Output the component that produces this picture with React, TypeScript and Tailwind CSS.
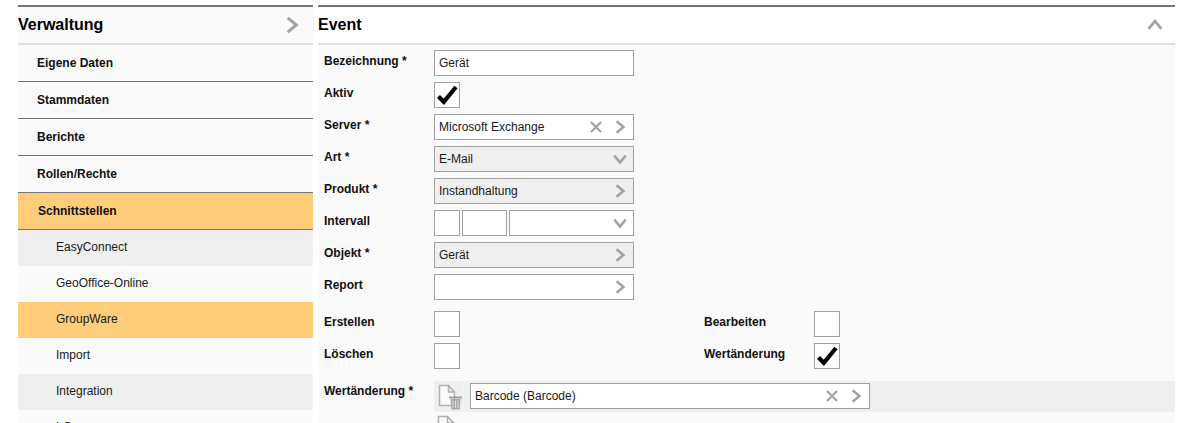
import { ReactNode } from "react";

const Chevron = ({ dir = "right", size = 16, className = "" }: { dir?: string; size?: number; className?: string }) => {
    const points: Record<string, string> = {
        right: "4,2 10,7 4,12",
        down: "2,4 7,10 12,4",
        up: "2,10 7,4 12,10",
    };
    return (
        <svg width={size} height={size} viewBox="0 0 14 14" className={className}>
            <polyline points={points[dir]} fill="none" stroke="#a3a3a3" strokeWidth="2.2" />
        </svg>
    );
};

const Cross = () => (
    <svg width="14" height="14" viewBox="0 0 14 14">
        <path d="M2 2 L12 12 M12 2 L2 12" stroke="#a3a3a3" strokeWidth="2.2" fill="none" />
    </svg>
);

const Check = () => (
    <svg width="24" height="24" viewBox="0 0 24 24">
        <path d="M3.5 13.5 L8.8 18.8 L21 4" stroke="#000" strokeWidth="4.2" fill="none" />
    </svg>
);

const FileIcon = ({ trash }: { trash?: boolean }) => (
    <svg width="26" height="26" viewBox="0 0 26 26">
        <path d="M3.5 1.5 H12.5 L18.5 8 V21.5 H3.5 Z M12.5 1.5 V8 H18.5" fill="#fafafa" stroke="#b0b0b0" strokeWidth="1.5" />
        {trash && (
            <g>
                <path d="M13 13.5 H26" stroke="#9a9a9a" strokeWidth="1.8" />
                <path d="M14.5 15 H24.5 L23.6 25.5 H15.4 Z" fill="#a8a8a8" />
                <path d="M17 16.5 V24 M19.5 16.5 V24 M22 16.5 V24" stroke="#e4e4e4" strokeWidth="0.9" />
            </g>
        )}
    </svg>
);

const Box = ({ checked }: { checked?: boolean }) => (
    <div className="w-[26px] h-[26px] bg-white border border-[#a0a0a0] flex items-center justify-center">
        {checked && <Check />}
    </div>
);

const Field = ({ text, grey, children, className = "w-[200px]" }: { text?: string; grey?: boolean; children?: ReactNode; className?: string }) => (
    <div className={`${className} h-[26px] border border-[#a0a0a0] flex items-center pl-1 pr-[5px] ${grey ? "bg-[#efefef]" : "bg-white"}`}>
        <span className="flex-1 text-[12px] text-[#1a1a1a]">{text}</span>
        {children}
    </div>
);

const Row = ({ label, children }: { label: string; children: ReactNode }) => (
    <div className="flex h-[26px] mb-[6px]">
        <div className="w-[110px] font-bold text-[12px] text-[#111] leading-[22px]">{label}</div>
        {children}
    </div>
);

const navItems = ["Eigene Daten", "Stammdaten", "Berichte", "Rollen/Rechte"];
const subItems = [
    { name: "EasyConnect", bg: "bg-[#efefef]" },
    { name: "GeoOffice-Online", bg: "bg-[#fafafa]" },
    { name: "GroupWare", bg: "bg-[#fdcd7a]" },
    { name: "Import", bg: "bg-[#fafafa]" },
    { name: "Integration", bg: "bg-[#efefef]" },
    { name: "LGeo", bg: "bg-[#fafafa]" },
];

export default function App() {
    return (
        <div className="h-[423px] w-[1178px] overflow-hidden bg-white flex pt-[5px] pl-[18px] font-['Liberation_Sans',Arial,sans-serif]">
            <div className="w-[295px] border-t-2 border-[#757575] bg-[#fafafa]">
                <div className="h-[38px] border-b-2 border-[#e0e0e0] flex items-center justify-between pr-[11px] text-[16px] font-bold text-black">
                    <span className="-mt-[1px]">Verwaltung</span>
                    <Chevron size={20} />
                </div>
                {navItems.map((item) => (
                    <div key={item} className="h-[37px] border-b border-[#757575] pl-[19px] flex items-center text-[12px] font-bold text-[#111]">
                        {item}
                    </div>
                ))}
                <div className="h-[37px] border-b border-[#757575] pl-[20px] flex items-center text-[12px] font-bold text-[#111] bg-[#fdcd7a]">
                    Schnittstellen
                </div>
                {subItems.map((item) => (
                    <div key={item.name} className={`h-[36px] pl-[38px] flex items-center text-[12px] text-[#1a1a1a] pb-[2px] ${item.bg}`}>
                        {item.name}
                    </div>
                ))}
            </div>
            <div className="w-[857px] ml-[5px] border-t-2 border-[#757575] bg-[#fafafa]">
                <div className="h-[38px] border-b-2 border-[#e0e0e0] bg-white flex items-center justify-between pr-[11px] text-[16px] font-bold text-black">
                    <span className="-mt-[1px]">Event</span>
                    <Chevron dir="up" size={18} />
                </div>
                <div className="pt-[5px] pl-[6px]">
                    <Row label="Bezeichnung *"><Field text="Gerät" /></Row>
                    <Row label="Aktiv"><Box checked /></Row>
                    <Row label="Server *">
                        <Field text="Microsoft Exchange">
                            <span className="mr-[9px] flex"><Cross /></span>
                            <Chevron />
                        </Field>
                    </Row>
                    <Row label="Art *"><Field text="E-Mail" grey><Chevron dir="down" /></Field></Row>
                    <Row label="Produkt *"><Field text="Instandhaltung" grey><Chevron /></Field></Row>
                    <Row label="Intervall">
                        <div className="flex gap-[2px]">
                            <Box />
                            <div className="w-[45px] h-[26px] bg-white border border-[#a0a0a0]" />
                            <Field className="w-[125px]"><Chevron dir="down" /></Field>
                        </div>
                    </Row>
                    <Row label="Objekt *"><Field text="Gerät" grey><Chevron /></Field></Row>
                    <Row label="Report"><Field><Chevron /></Field></Row>
                    <div className="grid grid-cols-[380px_1fr] mt-[5px] pt-[5px]">
                        <Row label="Erstellen"><Box /></Row>
                        <Row label="Bearbeiten"><Box /></Row>
                        <Row label="Löschen"><Box /></Row>
                        <Row label="Wertänderung"><Box checked /></Row>
                    </div>
                    <div className="flex mt-[6px]">
                        <div className="w-[110px] font-bold text-[12px] text-[#111] leading-[20px]">Wertänderung *</div>
                        <div className="flex-1">
                            <div className="h-[31px] bg-[#efefef] flex">
                                <div className="w-[30px] flex justify-center border-r border-[#f5f5f5] h-full items-center"><FileIcon trash /></div>
                                <div className="ml-[6px] pt-[2px]">
                                    <Field text="Barcode (Barcode)" className="w-[400px]">
                                        <span className="mr-[9px] flex"><Cross /></span>
                                        <Chevron />
                                    </Field>
                                </div>
                            </div>
                            <div className="pl-[1px] pt-[3px]"><FileIcon /></div>
                        </div>
                    </div>
                </div>
            </div>
        </div>
    );
}
